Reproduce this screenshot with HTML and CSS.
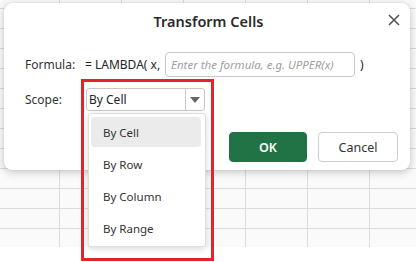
FILE: index.html
```html
<!DOCTYPE html>
<html lang="en">
  <head>
    <meta charset="UTF-8" />
    <link rel="stylesheet" href="styles.css">
    <title>Transform Cells</title>
  </head>
  <body>
    <div class="sheet"></div>

    <div class="dialog">
      <div class="dialog-header">
        <h1 class="dialog-title">Transform Cells</h1>
        <button class="close-btn" aria-label="Close">
          <svg width="12" height="12" viewBox="0 0 12 12">
            <path d="M1 1 L11 11 M11 1 L1 11" stroke="#555" stroke-width="1.6" fill="none" />
          </svg>
        </button>
      </div>

      <div class="form-row formula-row">
        <span class="label">Formula:</span>
        <span class="prefix">= LAMBDA( x,</span>
        <div class="input">Enter the formula, e.g. UPPER(x)</div>
        <span class="suffix">)</span>
      </div>

      <div class="form-row scope-row">
        <span class="label">Scope:</span>
        <div class="select">
          <span class="select-value">By Cell</span>
          <span class="select-arrow"></span>
          <ul class="options">
            <li class="option selected">By Cell</li>
            <li class="option">By Row</li>
            <li class="option">By Column</li>
            <li class="option">By Range</li>
          </ul>
        </div>
      </div>

      <div class="actions">
        <button class="btn btn-primary">OK</button>
        <button class="btn">Cancel</button>
      </div>
    </div>

    <div class="highlight"></div>
  </body>
</html>
```

FILE: styles.css
```css
* {
  margin: 0;
  padding: 0;
  box-sizing: border-box;
}

body {
  width: 416px;
  height: 262px;
  overflow: hidden;
  background: #fff;
  font-family: "Noto Sans", "Open Sans", sans-serif;
  color: #242424;
  position: relative;
}

.sheet {
  height: 247px;
  background-color: #fafafa;
  background-image:
    linear-gradient(to right, transparent 61px, #dcdcdc 61px),
    linear-gradient(to bottom, transparent 19px, #dcdcdc 19px);
  background-size: 62px 100%, 100% 20px;
  background-position: -2px 0, 0 9px;
}

.dialog {
  position: absolute;
  left: 4px;
  top: 3px;
  width: 406px;
  height: 167px;
  background: #fff;
  border-radius: 8px;
  box-shadow: 0 2px 8px rgba(0, 0, 0, 0.22), 0 0 1px rgba(0, 0, 0, 0.2);
  padding: 0 12px 8px 21px;
  display: flex;
  flex-direction: column;
}

.dialog-header {
  height: 36px;
  display: flex;
  align-items: center;
  justify-content: center;
  position: relative;
}

.dialog-title {
  font-size: 14.5px;
  font-weight: 600;
  color: #2b2b2b;
  margin-right: 6px;
}

.close-btn {
  position: absolute;
  right: -2px;
  top: 11px;
  width: 12px;
  height: 12px;
  border: none;
  background: none;
  display: flex;
}

.form-row {
  display: flex;
  align-items: center;
  font-size: 12px;
}

.label {
  width: 60px;
  color: #333;
}

.formula-row {
  margin-top: 13px;
  height: 25px;
}

.prefix {
  width: 80px;
}

.input {
  width: 190px;
  height: 25px;
  border: 1px solid #c8c8c8;
  border-radius: 4px;
  padding-left: 5px;
  display: flex;
  align-items: center;
  font-style: italic;
  color: #a0a0a0;
  font-size: 11.5px;
}

.suffix {
  margin-left: 5px;
}

.scope-row {
  margin-top: 11px;
  height: 23px;
}

.label + .select {
  margin-left: 1px;
}

.select {
  position: relative;
  width: 119px;
  height: 23px;
  border: 1px solid #c8c8c8;
  border-radius: 3px;
  display: flex;
  align-items: center;
}

.select-value {
  flex: 1;
  padding-left: 2px;
}

.select-arrow {
  width: 19px;
  height: 100%;
  border-left: 1px solid #c8c8c8;
  display: flex;
  align-items: center;
  justify-content: center;
}

.select-arrow::after {
  content: "";
  border-left: 5px solid transparent;
  border-right: 5px solid transparent;
  border-top: 6px solid #666;
}

.options {
  position: absolute;
  left: 1px;
  top: 24px;
  width: 118px;
  height: 134px;
  list-style: none;
  background: #fff;
  border: 1px solid #dedede;
  border-radius: 3px;
  box-shadow: 0 2px 6px rgba(0, 0, 0, 0.15);
  padding: 3px 4px 0 2px;
  z-index: 5;
}

.option {
  height: 30px;
  margin-bottom: 2px;
  padding-left: 12px;
  display: flex;
  align-items: center;
  border-radius: 4px;
  font-size: 11.5px;
  color: #333;
}

.option.selected {
  background: #ebebeb;
}

.actions {
  margin-top: 21px;
  display: flex;
  justify-content: flex-end;
  gap: 11px;
}

.btn {
  width: 80px;
  height: 30px;
  border: 1px solid #cfcfcf;
  border-radius: 4px;
  background: #fff;
  font-family: inherit;
  font-size: 12.5px;
  color: #333;
}

.btn-primary {
  width: 78px;
  background: #217346;
  border-color: #217346;
  color: #fff;
  font-weight: 600;
}

.highlight {
  position: absolute;
  left: 81px;
  top: 79px;
  width: 133px;
  height: 182px;
  border: 3px solid #e3242b;
  z-index: 10;
}
```
